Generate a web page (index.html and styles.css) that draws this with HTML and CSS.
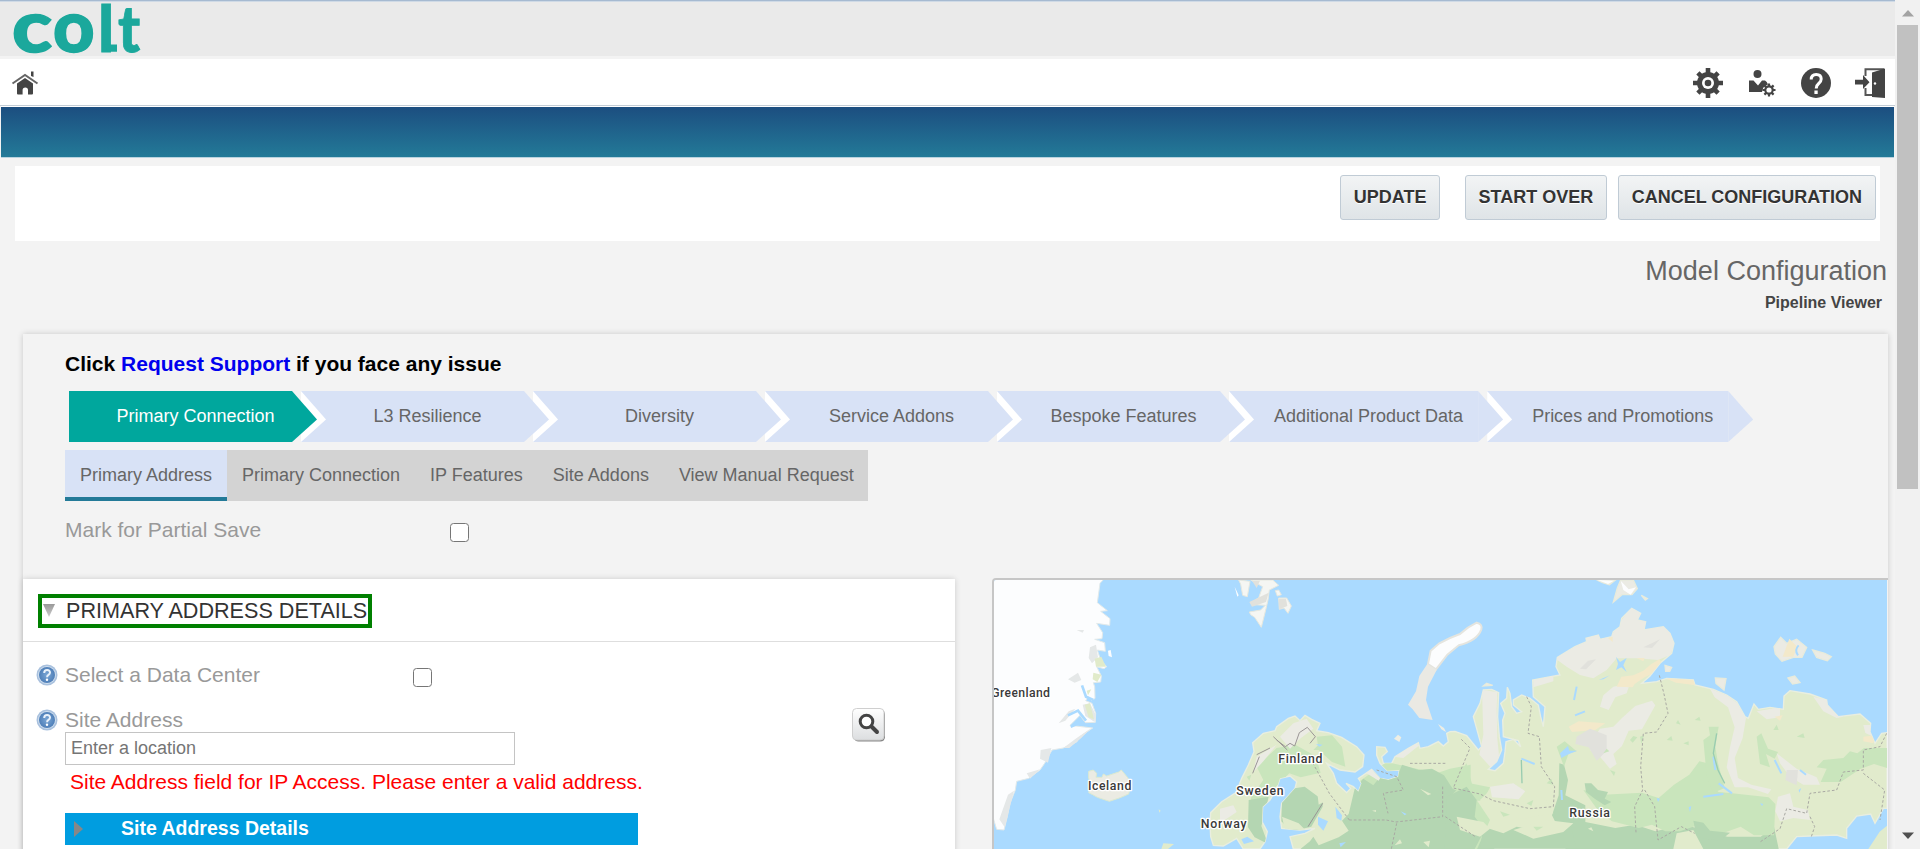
FILE: index.html
```html
<!DOCTYPE html>
<html lang="en">
<head>
<meta charset="utf-8">
<title>Model Configuration</title>
<link rel="stylesheet" href="styles.css">
</head>
<body>
<div class="window">
<div class="page">
  <header class="brand">
    <svg class="logo" width="150" height="54" viewBox="0 0 150 54" role="img">
      <text class="logo-round" transform="translate(12 50.500) scale(1.150 1)">c</text>
      <text class="logo-round" transform="translate(53 50.500)">o</text>
      <text class="logo-tall" x="98" y="50.500">l</text>
      <text class="logo-tall" transform="translate(118 50.500) scale(.920 1)">t</text>
      <path class="logo-foot" d="M104 43.500h13v7.300h-9z"/>
    </svg>
  </header>
  <nav class="toolbar">
    <svg class="home" width="28" height="24" viewBox="0 0 28 24">
      <path d="M1.500 12.500 14 4l12.500 8.500" fill="none" stroke="#666" stroke-width="2"/>
      <path d="M20 .5h2.500v5.500l-2.500-1z"/>
      <path d="M6 12.500 14 7l8 5.500v10q0 1-1 1h-4v-4.500q0-2.500-2.700-2.500t-2.700 2.500v4.500H7q-1 0-1-1z"/>
    </svg>
    <div class="tools">
      <svg width="30" height="30" viewBox="0 0 30 30">
        <path d="M15 0v30M0 15h30M4.900 4.900l20.200 20.200M25.100 4.900 4.900 25.100" stroke="#444" stroke-width="4.600"/>
        <circle cx="15" cy="15" r="11"/><circle cx="15" cy="15" r="6" fill="#fff"/><circle cx="15" cy="15" r="3.300"/>
      </svg>
      <svg class="users" width="28" height="28" viewBox="0 0 28 28">
        <circle cx="9.500" cy="5" r="4"/>
        <path d="M1 11.500h4.500l4.500 5 4-5h3q2 1 3 4-4 1-5 4l-1 3.500H1z"/>
        <g transform="translate(21 21)"><path d="M0-6.500v13M-6.500 0h13M-4.600-4.600l9.200 9.200M4.600-4.600l-9.200 9.200" stroke="#444" stroke-width="2.200"/><circle r="4.800"/><circle r="2.600" fill="#fff"/></g>
      </svg>
      <svg width="30" height="30" viewBox="0 0 30 30">
        <circle cx="15" cy="15" r="15"/>
        <path d="M10.200 11.500q0-5 5-5t5 4.500q0 2.500-2.500 4.500t-2.500 5" fill="none" stroke="#fff" stroke-width="3"/>
        <path d="M13.400 22.500h3.300v3.500h-3.300z" fill="#fff"/>
      </svg>
      <svg width="30" height="30" viewBox="0 0 30 30">
        <path d="M10.500 8V1.200H29M10.500 20v7h7" fill="none" stroke="#555" stroke-width="2"/>
        <path d="M17 4.500 30 .5v29.500L17 29z"/><circle cx="20" cy="15.500" r="1.200" fill="#fff"/>
        <path d="M0 11.800h8V7l6.500 7.300L8 21v-4.500H0z"/>
      </svg>
    </div>
  </nav>
  <div class="banner"></div>

  <div class="actions">
    <button class="btn update">UPDATE</button>
    <button class="btn start">START OVER</button>
    <button class="btn">CANCEL CONFIGURATION</button>
  </div>

  <div class="title">
    <h1>Model Configuration</h1>
    <div class="viewer">Pipeline Viewer</div>
  </div>

  <main class="config">
    <p class="support">Click <a>Request Support</a> if you face any issue</p>
    <div class="steps">
      <div class="step active">Primary Connection</div>
      <div class="step">L3 Resilience</div>
      <div class="step">Diversity</div>
      <div class="step">Service Addons</div>
      <div class="step">Bespoke Features</div>
      <div class="step">Additional Product Data</div>
      <div class="step">Prices and Promotions</div>
    </div>
    <div class="tabs">
      <div class="tab selected">Primary Address</div>
      <div class="tab">Primary Connection</div>
      <div class="tab">IP Features</div>
      <div class="tab">Site Addons</div>
      <div class="tab">View Manual Request</div>
    </div>
    <div class="partial"><span class="label">Mark for Partial Save</span><span class="check"></span></div>

    <div class="columns">
      <section class="address">
        <div class="address-head">
          <div class="legend">
            <svg width="14" height="14" viewBox="0 0 14 14"><defs><linearGradient id="tri" x2="0" y2="1"><stop offset="0" stop-color="#999"/><stop offset="1" stop-color="#ccc"/></linearGradient></defs><path d="M1 0h12L7 13z" fill="url(#tri)"/></svg>
            <span>PRIMARY ADDRESS DETAILS</span>
          </div>
        </div>
        <svg width="0" height="0" class="defs"><defs>
          <radialGradient id="ball"><stop offset="0" stop-color="#7ba7d6"/><stop offset="1" stop-color="#4f7fb8"/></radialGradient>
          <symbol id="help" viewBox="0 0 22 22"><circle cx="11" cy="11" r="10.500" fill="#a9c1de"/><circle cx="11" cy="11" r="9" fill="#cfdeee"/><circle cx="11" cy="11" r="8" fill="url(#ball)"/><path d="M8.200 9q0-3 2.900-3t2.900 2.600q0 1.400-1.500 2.300-1.400.8-1.400 2.300" fill="none" stroke="#e9f1fa" stroke-width="2"/><circle cx="11" cy="15.700" r="1.200" fill="#fff"/></symbol>
        </defs></svg>
        <div class="field center-row">
          <svg class="help" width="22" height="22"><use href="#help"/></svg>
          <span class="label">Select a Data Center</span><span class="check"></span>
        </div>
        <div class="field site-row">
          <svg class="help" width="22" height="22"><use href="#help"/></svg>
          <div class="site">
            <span class="label">Site Address</span>
            <div class="input">Enter a location</div>
          </div>
          <svg class="search" width="34" height="34" viewBox="0 0 34 34"><defs><linearGradient id="key" x2="0" y2="1"><stop offset="0" stop-color="#fff"/><stop offset="1" stop-color="#dcdee0"/></linearGradient></defs>
            <rect x="2" y="2" width="31" height="31.500" rx="4.500" fill="#888"/><rect x=".5" y=".5" width="31.500" height="31.500" rx="4" fill="url(#key)" stroke="#cfcfcf"/>
            <circle cx="14.500" cy="13.500" r="6.300" fill="#fff" stroke="#444" stroke-width="3"/><path d="m19.500 18.500 5.500 5.500" stroke="#444" stroke-width="4" stroke-linecap="round"/></svg>
        </div>
        <div class="error">Site Address field for IP Access. Please enter a valid address.</div>
        <div class="details"><svg width="10" height="16"><path d="M0 0 9 8 0 16z" fill="#878787"/></svg><span>Site Address Details</span></div>
      </section>

      <section class="map">
        <svg width="893" height="269" viewBox="42 30 2679 807">
          <rect x="42" y="30" width="2679" height="807" fill="#aadaff"/>
          <!-- Greenland -->
          <path fill="#fcfdfe" stroke="#e3eaea" stroke-width="3" d="M40 28H371L360 40 352 98 382 122 362 124 390 146 389 166 350 160 368 188 366 206 344 208 374 218 376 244 352 240 362 270 380 290 372 296 350 290 364 318 362 336 340 338 344 350 345 385 335 392 325 380 317 392 336 400 347 430 346 457 316 458 300 436 270 466 338 474 300 500 290 516 250 534 216 540 194 580 180 600 146 625 110 634 106 660 90 700 82 740 72 780 50 778 40 745z"/>
          <path fill="#e5e8e8" d="M330 232l18-8 6 38-18 18-10-16zM264 328l30-20 10 22-20 8zM308 404l22-4 16 32-2 24-28-18zM250 534l40-30 44-30-30 30-36 30zM182 540l32-6-10 44-24-12zM290 180l22 0-4 8zM236 460l30-36 20-8-30 36zM58 748l26-74 18-12-28 110zM140 610l40-12-30 28z"/>
          <path fill="#e1ebca" d="M344 266l20-6 14 30-30 0zM340 308l24 6-12 22-14-8zM314 404l16-4 12 48-16-6zM320 362l14-4-10 18z"/>
          <path fill="none" stroke="#aadaff" stroke-width="8" d="M306 346l12 34 22 10M264 436l30-14 24 30M272 470l32-14"/>
          <path fill="#fcfdfe" d="M384 242l8-2 4 22-10-4z"/>
          <!-- Iceland -->
          <path fill="#ebebe3" stroke="#dcead0" stroke-width="3" d="M326 604l14-4 10 10-2 12 18 0 4-10 10 6 36-12 8-6 20 24 8 24-6 24-28 12-30 10-36-12-14-8-12-6 8-20-8-24z"/>
          <!-- Svalbard -->
          <path fill="#f5f6f3" stroke="#e6e8df" stroke-width="3" d="M776 30l34 4-8 46-14-4-6-34zM812 30h66l18 16-28 14-4 30-6 26-14 56-20-30-12-8-4-8 34-6 14-14-34-2 4-14 10-6 12-34zM886 62l10-2 8 14-12 4zM896 84l24 0 14 24-10 22-12-16-14 4z"/>
          <path fill="#e1e1dc" d="M808 96l58-28-8 28-42 14zM896 86l22 0 4 22-24 10zM816 32l24 0-10 22z"/>
          <path fill="#fcfdfe" d="M764 50l12 26-4 4z"/>
          <!-- Novaya Zemlya -->
          <path fill="#fcfdfe" stroke="#e5e5df" stroke-width="6" d="M1490 158q18 4 14 20-12 34-68 48l-34 28-34 44-24-16 8-40 26-22q28-16 62-28 24-22 50-34z"/>
          <path fill="#eae9e3" d="M1342 282l28 18-26 50-6 40 20 60-40-6-20-26-14-14 24-40 10-46z"/>
          <path fill="#eeeee4" d="M1374 462l18 12 6 12-14-8zM1242 506l12-12 10 8-6 14z"/>
          <!-- Northern Europe and Russia -->
          <defs><path id="mainland" d="M700 826L692 800 690 760 692 728 725 695 768 668 785 625 805 585 822 545 818 518 850 490 885 482 890 470 925 445 945 438 960 452 975 436 995 448 1020 460 1010 482 1045 488 1085 502 1130 530 1152 555 1148 590 1125 606 1080 600 1040 580 1060 610 1070 640 1100 668 1112 655 1098 640 1120 650 1135 665 1145 640 1135 625 1175 598 1200 625 1225 630 1255 620 1258 600 1222 602 1200 580 1190 555 1190 530 1215 532 1222 545 1205 560 1210 580 1235 580 1245 560 1285 535 1315 518 1320 535 1345 530 1375 515 1390 528 1405 515 1400 490 1410 485 1425 484 1460 497 1495 540 1505 530 1498 505 1480 440 1500 400 1510 360 1535 358 1556 368 1553 440 1558 500 1565 540 1550 575 1525 598 1545 602 1570 580 1575 545 1578 515 1600 508 1622 530 1615 512 1570 500 1568 450 1575 430 1562 400 1580 385 1582 352 1590 370 1595 410 1610 430 1625 425 1600 405 1600 390 1625 375 1650 385 1675 405 1682 440 1690 470 1695 410 1660 380 1658 330 1740 315 1728 290 1732 262 1785 230 1820 215 1818 205 1855 195 1860 208 1895 200 1900 185 1920 170 1925 145 1955 115 1982 130 1972 150 1997 155 1992 180 2050 170 2070 190 2082 220 2075 250 2040 280 2010 318 1985 340 2030 335 2060 325 2140 330 2145 345 2200 358 2240 375 2270 395 2295 440 2305 445 2322 402 2335 418 2370 412 2410 418 2412 378 2430 362 2490 372 2540 390 2542 405 2575 440 2640 432 2672 460 2670 485 2685 520 2705 490 2721 488V715L2710 715 2685 760 2672 732 2630 738 2600 775 2600 805 2570 795 2490 798 2450 800 2420 837H940L930 800 975 790 1005 775 960 780 905 775 900 740 905 700 945 655 950 635 930 618 900 625 890 655 870 690 848 710 846 755 862 785 855 815 840 837H790L770 805 730 828z"/><clipPath id="land"><use href="#mainland"/></clipPath></defs>
          <use href="#mainland" fill="#e1ebcc" stroke="#e9eee0" stroke-width="4"/>
          <g clip-path="url(#land)">
          <path fill="#c9e5bc" d="M830 590l60-56 56-10 60 34 16 50-60 14-34-12-60 60-36 42-26 28 8-60 36-50zM1010 500l46-4 30 34 10 60-40-14-40-36zM1130 640l90-64 150 34 40-14 62-12 0 80-90 54-150 2zM1410 640l50-60 10 60 60 12-20 40-70 0z"/>
          <path fill="#b4d6b2" d="M806 690l60-10-10 44-12 44 20 54-40-20-20-30zM906 690l28-34 40-6 54 40 0 20-34 60-60 14-30-30zM1124 656l26-30 30 20 24-30 52-6 10-26 50 16 40-4 36 20 26 40 72 34 4 48 50 100H960l30-24 10-14 16 26 60-24 30-20-20-30 20-20z"/>
          <path fill="#b4d6b2" d="M1738 580l14 4 12 46-8 46 60 30 0 50 90 18 60-10 60 20 86-20 60 16 70 20 100 0 40-30 16 76H1760l-24-70-20-40 20-60z"/>
          <path fill="#c9e5bc" d="M1810 660l60 14 116-6 50 16 46-40 46-30 30-40 24 6 14 70 20 16 40 4 110 12 20 20-4 94-60 0-40-26-50 18-46 0-40-20-46 16-44 0-40-20-40 10-80-20-40-30z"/>
          <path fill="#c9e5bc" d="M2170 510l20-14-4-26 30 0-10 60 8 50 20 74-34 14-20-50zM2330 500l14-10 20 46 30 10-10 20-26-14 12 40-30-10zM2530 570l60-6 20-20 22 6 20-16 70 0 0 60-40-12-40 14-60 40-60 0 18-40-30-4z"/>
          <path fill="#c9e5bc" d="M1730 530l24-16 36 30-24 6-14 40zM1410 680l60-60 20 70 40 60-40 90h-80z"/>
          <path fill="#b4d6b2" d="M1400 680l60-30 30 40-6 50 30 40-30 57h-90zM1510 770l60 20 40-20 100 20 60-30 20 76H1500zM1814 640l20 0 20 20 30 6-10 20 20 10-20 10-30-20-26-20zM2140 752l30 6 20 24 60 6-30 24-70-10z"/>
          <path fill="#e1ebcc" d="M1430 740l80 16 20 20-30 24-60-20zM1500 690l40-40 80 10 80 30 20 40-90 16-110-14zM1600 780l100-30 80 10-30 26-90 20zM2090 790l50-10 30 57h-90zM1010 650l50 0 50 60-20 0-50-20-24 14zM906 740l50 20 20 20-60 6zM1320 656l34 16-10 4zM1176 722l12-2 0 6zM1244 826l16-18 6 12zM1330 816l20-4-4 20zM1824 776l10-4 6 12zM1480 756l24 0-6 14z"/>
          <!-- Tundra and highlands -->
          <path fill="#ebebe4" d="M1725 265L1785 230 1820 215 1818 200 1855 190 1890 205 1900 188 1925 150 1955 110 1985 130 1997 155 1992 180 2050 165 2075 190 2085 220 2070 255 2035 270 1970 265 1910 265 1880 300 1840 325 1800 315 1760 290z"/>
          <path fill="#ebebe4" d="M1506 360l46 6-2 50 2 90 6 60-24 28-36-40 12-60zM1660 330l60-12 0 16-60 18zM1870 376l30-26 50-10-10 30-34 12-20 38-26-10zM1860 476l40-6 26-26 40-36 50-16 10 14-20 36-20 36-40 4-20 46-26 24 10 30-20 14-30-36-30-20 14-40zM2190 356l50 20 30 22 28 46-10 60-24 60 10 60 40 20 60 14-10 14-60-20-40 0-24-60 10-60 14-60-20-60-40-30zM2390 550l60 46 60 26 10 22-50 0-40-24-30-40zM2394 680l36-10 10 40 44 10 6 30-50-6-40 10-14-30zM2330 424l70-12 0 30-40 6zM2500 380l40 10 50 50-20 4-40-20zM2650 465l30 0 10 40-34-16zM900 500l40-40 40-14 20 30-40 30-30 30zM830 560l60-36-40 50-30 32zM1240 560l60-40 20 4-50 40zM1150 604l26-6 26 24-6 10zM720 716l40-10 10 20-30 20-20 10zM1530 650l70-10 36 24-20 24-80-6z"/>
          <path fill="#f3e9ca" d="M1766 470l30-16 80 6-30 20-70 6zM1910 350l14-30 36-4 30-14 24-20 24-14 6 10-30 34-20 10-30 20-6 10zM1970 264l24 0-4 10zM2060 326l20-6 68 8 0 18-60-8zM2650 500l36-4-6 24-30-6zM1884 204l14-4 0 16zM2384 440l24-4-8 16z"/>
          <path fill="#e1e1dc" d="M1790 500l40-24 50 20 0 46-30 30-24-40-40-10zM2420 600l34 0-4 46-34-16zM1990 232l50-24-24 26zM1800 296l24-24 24-4-30 30z"/>
          <path fill="#c9e5bc" d="M2088 460l6-10 8 14zM2144 450l14-10 4 12zM2060 510l14-12 4 14zM2110 520l16-6 0 12zM1870 550l10-14 8 8zM1950 510l10-12 12 4-14 16zM1890 600l16 6-4 12zM1980 500l12-4-8 26zM2380 480l10-16 6 16zM2450 500l20-10 4 14zM1700 640l14-14 6 18zM1640 700l20-10-6 18zM1560 724l30 10-20 6zM1660 770l30 0-20 12zM1000 540l14-14 10 14zM870 600l16-10 8 16zM800 620l14-6-6 18z"/>
          </g>
          <!-- Arctic islands -->
          <path fill="#ebebe4" stroke="#e8ebdc" stroke-width="4" d="M1850 30l54 2-16 12-20-6zM1922 30h38l12 26-16 18-30 0-26 22 12-42zM1984 76l18 10-6 4zM2382 230l20-28 18 18 30-12 30 24-14 30-26 0-34 12-20-22zM2498 240l36 10 20 10-12 12-32-10zM2424 324l20-6 16 20-22 4zM2206 324l32 2-6 34-24-20zM2055 286l20 6-6 12-12 0zM1520 340l18 6-28 2z"/>
          <path fill="#fcfdfe" d="M1922 32l24 26 22-6-16 22-22-14zM1852 30l50 2-18 10z"/>
          <path fill="#f3e9ca" d="M2428 206l24 24-12 30-32 0z"/>
          <path fill="none" stroke="#aadaff" stroke-width="6" d="M2456 226q-14 14-2 30"/>
          <path fill="#e1ebcc" d="M2665 837l34-52 22-18v70zM536 718l6 4-4 6zM550 820l32 2-18 15h-20z"/>
          <!-- Lakes and rivers -->
          <path fill="#aadaff" d="M1014 740l30 14-14 28-16-18zM1066 710l20 26-2 16-14-8zM1078 820l20-4-16 16zM1908 260l12 16 20-12-10 22 10 20-16-14-16 8 6-18zM1740 550l24-22 4 14 24 0-30 12-18 10zM1008 522l20 2-10 6zM1262 724l18 8-6 4zM2030 684l10 2-6 10zM2126 712l8-4-4 18zM2340 700l10 2-4 6zM2456 660l8-6-6 14zM784 808l18-8 20 14-30 8zM1856 330l34-14-20 12z"/>
          <path fill="none" stroke="#aadaff" stroke-width="6" d="M1790 350l-8 40M2216 640l40 30M2200 560l6 40M1624 566l40 16M2170 680l60-8M1785 436l30-12M2384 570l20 40M2460 600l18 14M1744 660l2 30"/>
          <path fill="none" stroke="#99ccb0" stroke-width="4" d="M2210 490l-10 60 14 50 20 40M1624 570l2 70"/>
          <!-- Borders -->
          <g fill="none" stroke="#a9a9a3" stroke-width="3" stroke-dasharray="8 6"><path d="M2038 316l14 56 12 58-34 56-40 4-8 100 6 70-24 50 4 77M1994 660l30 50 10 100 70-40 40 20M1640 380l14 30-10 80 34 10 6 90 40 60-4 60-70 6-110-24-40-20-80-18 50-120-30-30M1290 580h110M1190 600l60 20 20 40-60 10 14 60M1388 650v90l-140 16-30-6-110 0 M1108 750l-60-80-60-110M1250 760l-16 77M1396 740l90 60M2720 490l-20 40-50 10 0 60-60 6-20 54-80 10-10 60-60-14-20 60-60 40M2650 610l64 50-14 90M2490 740l14 30-10 30"/></g>
          <g fill="none" stroke="#9a9595" stroke-width="3"><path d="M880 500l42 40M890 510l26 20 14-10 14 8 14-40 24-16 24 28-16 20M830 554l40-20M1028 700l-44 70M838 560l-20 50"/></g>
          <g class="places"><text x="34" y="381" textLength="176">Greenland</text><text x="324" y="659" textLength="130">Iceland</text><text x="895" y="578" textLength="132">Finland</text><text x="769" y="674" textLength="142">Sweden</text><text x="662" y="773" textLength="138">Norway</text><text x="1768" y="741" textLength="122">Russia</text></g>
        </svg>
      </section>
    </div>
  </main>
</div>
<aside class="scrollbar">
  <svg width="12" height="8"><path d="M0 7.500 6 1l6 6.500z" fill="#a3a3a3"/></svg>
  <div class="thumb"></div>
  <svg class="down" width="12" height="8"><path d="M0 .5h12L6 7z" fill="#505050"/></svg>
</aside>
</div>
</body>
</html>
```
FILE: styles.css
```css
* { box-sizing: border-box; }
body { margin: 0; font-family: "Liberation Sans", Arial, sans-serif; background: #f3f3f3; overflow: hidden; }
svg { display: block; flex: none; }
.window { display: flex; width: 1920px; height: 849px; overflow: hidden; }
.page { width: 1895px; height: 849px; overflow: hidden; background: #f3f3f3; }
.brand { height: 56px; border-top: 1px solid #a6bad1; background: #eaeaea; box-shadow: inset 0 1px #cfdae6; }
.logo { fill: #1ba89c; font-family: Lato, sans-serif; font-weight: 900; overflow: visible; }
.logo-round { font-size: 72px; stroke: #1ba89c; stroke-width: 1.5px; }
.logo-tall { font-size: 64px; stroke: #1ba89c; stroke-width: .8px; }
.toolbar { display: flex; justify-content: space-between; margin-top: 3px; height: 47px; padding: 9px 10px 0 11px; background: #fff; border-bottom: 1px solid #c3cdd6; fill: #444; }
.home { margin-top: 3px; }
.tools { display: flex; gap: 24px; }
.users { margin: 1px 1px 0; }
.banner { height: 52px; margin: 0 1px; border-top: 1px solid #fff; border-bottom: 1px solid #b9d3df; background: linear-gradient(#1c4e80, #237a98); }
.actions { display: flex; justify-content: flex-end; gap: 11px; width: 1865px; height: 75px; margin: 8px 0 0 15px; padding: 9px 4px 0 0; background: #fff; }
.btn { height: 45px; padding: 0 13px; border: 1px solid #c0cbd5; border-radius: 3px; background: linear-gradient(#f2f4f5, #dfe4e7); font: bold 18px "Liberation Sans", Arial, sans-serif; color: #333; text-shadow: 0 1px #fff; white-space: nowrap; }
.start { padding: 0 12.5px; }
.update { margin-right: 14px; padding: 0 12.5px; }
.title { padding: 15px 8px 0 0; text-align: right; }
h1 { margin: 0; font-weight: normal; font-size: 27px; line-height: 31px; color: #666; }
.viewer { margin-top: 6px; padding-right: 5px; font-weight: bold; font-size: 16px; line-height: 20px; color: #444; }
.config { width: 1865px; height: 540px; margin: 21px 0 0 23px; box-shadow: 0 0 6px rgba(0,0,0,.18); }
.support { margin: 0; padding: 18px 0 0 42px; font-weight: bold; font-size: 21px; line-height: 24px; color: #000; }
.support a { color: #00e; }
.steps { display: flex; gap: 9px; height: 51px; margin: 15px 0 0 46px; }
.step { position: relative; min-width: 223px; padding: 0 15px 0 45px; line-height: 50px; text-align: center; font-size: 18px; color: #666; background: #d8e2f6; white-space: nowrap; }
.step::after, .step:not(:last-child)::before { content: ""; position: absolute; top: 0; left: 100%; width: 25px; height: 51px; background: #d8e2f6; clip-path: polygon(0 0, 100% 56%, 0 100%); z-index: 2; }
.step:not(:last-child)::before { margin-left: 9px; background: #fff; z-index: 1; }
.step.active, .step.active::after { background: #00a79d; color: #fff; }
.tabs { display: flex; width: 803px; height: 51px; margin: 8px 0 0 42px; background: #d3d3d3; }
.tab { padding: 0 15px; line-height: 50px; font-size: 18px; color: #666; white-space: nowrap; }
.tab.selected { background: #d8e2f6; border-bottom: 4px solid #237a98; }
.label { font-size: 21px; line-height: 24px; color: #999; white-space: nowrap; }
.check { width: 19px; height: 19px; border: 1.5px solid #767676; border-radius: 3.5px; background: #fff; }
.partial { display: flex; height: 60px; margin: 17px 0 0 42px; }
.partial .label { width: 385px; }
.partial .check { margin-top: 5px; }
.columns { display: flex; gap: 37px; align-items: flex-start; height: 272px; }
.address { width: 932px; height: 290px; margin-top: 1px; background: #fff; box-shadow: 0 0 6px rgba(0,0,0,.16); }
.address-head { height: 63px; padding: 15px 0 0 15px; border-bottom: 1px solid #dedede; }
.legend { display: flex; align-items: center; gap: 10px; width: 334px; height: 34px; border: 4px solid green; font-size: 21.6px; color: #333; white-space: nowrap; }
.defs { position: absolute; }
.field { display: flex; padding-left: 13px; }
.field .help { margin: 1px 7px 0 0; }
.center-row { height: 46px; padding-top: 21px; }
.center-row .label { width: 348px; }
.center-row .check { margin-top: 5px; }
.site-row { padding-top: 20px; }
.site { width: 787px; }
.site .label { display: block; }
.input { width: 450px; height: 33px; padding-left: 5px; border: 1px solid #c4c4c4; line-height: 30px; font-size: 18px; color: #757575; }
.error { margin: 5px 0 0 47px; font-size: 21px; line-height: 24px; color: #f00; }
.details { display: flex; align-items: center; width: 573px; height: 32px; margin: 19px 0 0 42px; padding-left: 9px; gap: 37px; background: #009de0; color: #fff; font-weight: bold; font-size: 19.5px; }
.details span { position: relative; top: -1px; }
.map { width: 896px; height: 290px; border: 2px solid #c6c6c6; border-right: 0; border-radius: 4px 0 0 0; overflow: hidden; }
.places { font: 500 37px Roboto, sans-serif; fill: #3a3a3a; stroke: #fff; stroke-width: 8px; stroke-linejoin: round; paint-order: stroke; }
.scrollbar { display: flex; flex-direction: column; align-items: center; width: 25px; height: 849px; padding-top: 9px; background: #f1f1f1; }
.thumb { width: 21px; height: 464px; margin-top: 8px; background: #c1c1c1; }
.down { margin-top: 343px; }
```
